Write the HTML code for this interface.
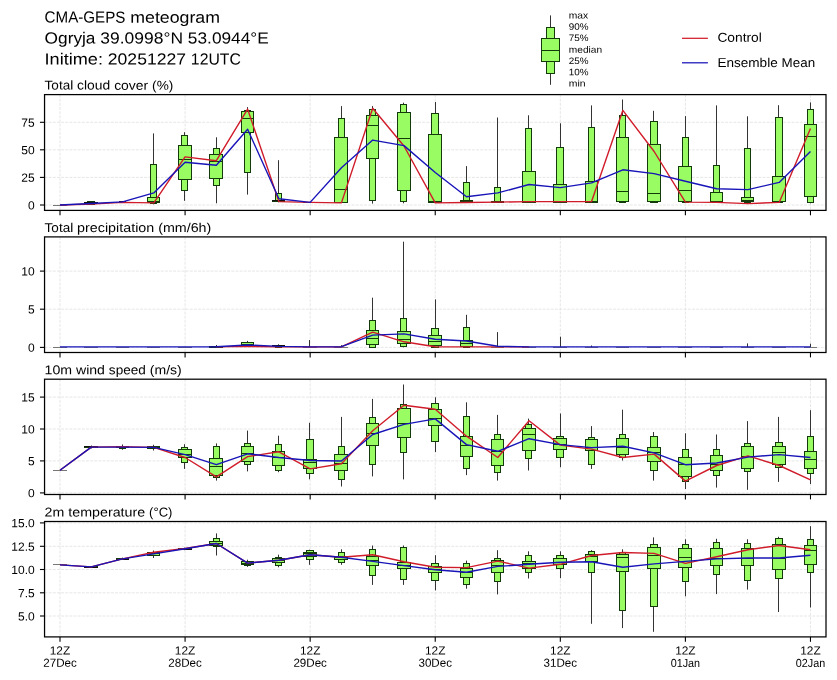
<!DOCTYPE html>
<html lang="en"><head><meta charset="utf-8"><title>CMA-GEPS meteogram</title>
<style>
html,body{margin:0;padding:0;background:#fff;}
body{width:837px;height:680px;overflow:hidden;}
svg{display:block;font-family:"Liberation Sans",sans-serif;will-change:transform;}
.gr{stroke:#e0e0e0;stroke-width:0.8;stroke-dasharray:2.9 1.25;fill:none;}
.fr{stroke:#000;stroke-width:1.25;fill:none;}
.tk{stroke:#000;stroke-width:1.1;}
.wh{stroke:#333;stroke-width:1;}
.bx{fill:#98fc62;stroke:#123a0a;stroke-width:1;}
.md{stroke:#123a0a;stroke-width:1;}
.be{stroke:#111;stroke-width:1;}
.bk{stroke:#111;}
.mg{stroke:#777;stroke-width:1;}
.rl{stroke:#d01c2a;stroke-width:1.4;fill:none;stroke-linejoin:round;}
.bl{stroke:#1814b8;stroke-width:1.4;fill:none;stroke-linejoin:round;}
</style></head><body>
<svg width="837" height="680" viewBox="0 0 837 680">
<rect x="0" y="0" width="837" height="680" fill="#fff"/>
<text x="44.6" y="22.6" font-size="16.12" fill="#000" transform="rotate(0.03 44.6 22.6)"><tspan x="44.6" textLength="80.82" lengthAdjust="spacingAndGlyphs">CMA-GEPS</tspan> <tspan x="130.3" textLength="89.66" lengthAdjust="spacingAndGlyphs">meteogram</tspan></text>
<text x="44.6" y="43.5" font-size="16.12" fill="#000" transform="rotate(0.03 44.6 43.5)"><tspan x="44.6" textLength="50.89" lengthAdjust="spacingAndGlyphs">Ogryja</tspan> <tspan x="100.37" textLength="82.63" lengthAdjust="spacingAndGlyphs">39.0998°N</tspan> <tspan x="187.88" textLength="80.85" lengthAdjust="spacingAndGlyphs">53.0944°E</tspan></text>
<text x="44.6" y="64.4" font-size="16.12" fill="#000" transform="rotate(0.03 44.6 64.4)"><tspan x="44.6" textLength="58.37" lengthAdjust="spacingAndGlyphs">Initime:</tspan> <tspan x="107.85" textLength="78.13" lengthAdjust="spacingAndGlyphs">20251227</tspan> <tspan x="190.86" textLength="49.96" lengthAdjust="spacingAndGlyphs">12UTC</tspan></text>
<line x1="550.5" y1="15.4" x2="550.5" y2="27.2" class="wh"/>
<line x1="550.5" y1="73.2" x2="550.5" y2="84.8" class="wh"/>
<rect x="546.5" y="27.5" width="8" height="46" class="bx"/>
<rect x="541.5" y="38.5" width="18" height="23" class="bx"/>
<line x1="541" y1="50.5" x2="560" y2="50.5" class="md"/>
<text x="568.8" y="18.4" font-size="9.35" textLength="19.39" lengthAdjust="spacingAndGlyphs" fill="#000" transform="rotate(0.03 568.8 18.4)">max</text>
<text x="568.8" y="29.8" font-size="9.35" textLength="19.78" lengthAdjust="spacingAndGlyphs" fill="#000" transform="rotate(0.03 568.8 29.8)">90%</text>
<text x="568.8" y="41" font-size="9.35" textLength="19.78" lengthAdjust="spacingAndGlyphs" fill="#000" transform="rotate(0.03 568.8 41)">75%</text>
<text x="568.8" y="52.7" font-size="9.35" textLength="33.36" lengthAdjust="spacingAndGlyphs" fill="#000" transform="rotate(0.03 568.8 52.7)">median</text>
<text x="568.8" y="63.9" font-size="9.35" textLength="19.78" lengthAdjust="spacingAndGlyphs" fill="#000" transform="rotate(0.03 568.8 63.9)">25%</text>
<text x="568.8" y="75.2" font-size="9.35" textLength="19.78" lengthAdjust="spacingAndGlyphs" fill="#000" transform="rotate(0.03 568.8 75.2)">10%</text>
<text x="568.8" y="86.6" font-size="9.35" textLength="16.78" lengthAdjust="spacingAndGlyphs" fill="#000" transform="rotate(0.03 568.8 86.6)">min</text>
<line x1="682" y1="38.3" x2="707.9" y2="38.3" stroke="#d01c2a" stroke-width="1.25"/>
<line x1="682" y1="62.8" x2="707.9" y2="62.8" stroke="#1814b8" stroke-width="1.25"/>
<text x="717.4" y="41.8" font-size="12.92" textLength="44.46" lengthAdjust="spacingAndGlyphs" fill="#000" transform="rotate(0.03 717.4 41.8)">Control</text>
<text x="717.4" y="67" font-size="12.92" fill="#000" transform="rotate(0.03 717.4 67)"><tspan x="717.4" textLength="60.32" lengthAdjust="spacingAndGlyphs">Ensemble</tspan> <tspan x="781.63" textLength="33.51" lengthAdjust="spacingAndGlyphs">Mean</tspan></text>
<text x="44.6" y="89.6" font-size="12.86" fill="#000" transform="rotate(0.03 44.6 89.6)"><tspan x="44.6" textLength="28.61" lengthAdjust="spacingAndGlyphs">Total</tspan> <tspan x="77.1" textLength="33.17" lengthAdjust="spacingAndGlyphs">cloud</tspan> <tspan x="114.17" textLength="34.05" lengthAdjust="spacingAndGlyphs">cover</tspan> <tspan x="152.12" textLength="21.2" lengthAdjust="spacingAndGlyphs">(%)</tspan></text>
<line x1="60" y1="94.6" x2="60" y2="210.4" class="gr"/>
<line x1="185.08" y1="94.6" x2="185.08" y2="210.4" class="gr"/>
<line x1="310.16" y1="94.6" x2="310.16" y2="210.4" class="gr"/>
<line x1="435.24" y1="94.6" x2="435.24" y2="210.4" class="gr"/>
<line x1="560.32" y1="94.6" x2="560.32" y2="210.4" class="gr"/>
<line x1="685.4" y1="94.6" x2="685.4" y2="210.4" class="gr"/>
<line x1="810.48" y1="94.6" x2="810.48" y2="210.4" class="gr"/>
<line x1="44.55" y1="205" x2="826" y2="205" class="gr"/>
<line x1="44.55" y1="177.4" x2="826" y2="177.4" class="gr"/>
<line x1="44.55" y1="149.8" x2="826" y2="149.8" class="gr"/>
<line x1="44.55" y1="122.3" x2="826" y2="122.3" class="gr"/>
<line x1="53" y1="205.5" x2="67" y2="205.5" class="mg"/>
<line x1="91.5" y1="201.1" x2="91.5" y2="201.8" class="wh"/>
<line x1="91.5" y1="204.3" x2="91.5" y2="204.8" class="wh"/>
<rect x="87.5" y="201.5" width="7" height="3" class="bx"/>
<rect x="84.5" y="202.5" width="13" height="1" class="bx bk"/>
<line x1="84" y1="203.5" x2="98" y2="203.5" class="md"/>
<line x1="122.5" y1="201.5" x2="122.5" y2="201.8" class="wh"/>
<line x1="122.5" y1="202.6" x2="122.5" y2="202.8" class="wh"/>
<rect x="119.5" y="201.5" width="6" height="1" class="bx bk"/>
<line x1="116" y1="202.5" x2="129" y2="202.5" class="be"/>
<line x1="116" y1="202.5" x2="129" y2="202.5" class="md"/>
<line x1="153.5" y1="133.4" x2="153.5" y2="164.4" class="wh"/>
<line x1="153.5" y1="203.3" x2="153.5" y2="204.3" class="wh"/>
<rect x="150.5" y="164.5" width="6" height="39" class="bx"/>
<rect x="147.5" y="197.5" width="12" height="5" class="bx"/>
<line x1="147" y1="201.5" x2="160" y2="201.5" class="md"/>
<line x1="184.5" y1="132.2" x2="184.5" y2="135.4" class="wh"/>
<line x1="184.5" y1="190.6" x2="184.5" y2="200.8" class="wh"/>
<rect x="181.5" y="135.5" width="6" height="55" class="bx"/>
<rect x="178.5" y="145.5" width="13" height="34" class="bx"/>
<line x1="178" y1="159.5" x2="192" y2="159.5" class="md"/>
<line x1="216.5" y1="137.3" x2="216.5" y2="148.2" class="wh"/>
<line x1="216.5" y1="185.7" x2="216.5" y2="203.3" class="wh"/>
<rect x="213.5" y="148.5" width="6" height="37" class="bx"/>
<rect x="209.5" y="154.5" width="13" height="24" class="bx"/>
<line x1="209" y1="161.5" x2="223" y2="161.5" class="md"/>
<line x1="247.5" y1="107.1" x2="247.5" y2="110.3" class="wh"/>
<line x1="247.5" y1="172.5" x2="247.5" y2="194.6" class="wh"/>
<rect x="244.5" y="110.5" width="6" height="62" class="bx"/>
<rect x="241.5" y="111.5" width="12" height="21" class="bx"/>
<line x1="241" y1="118.5" x2="254" y2="118.5" class="md"/>
<line x1="278.5" y1="160.2" x2="278.5" y2="193.4" class="wh"/>
<line x1="278.5" y1="201.8" x2="278.5" y2="202.3" class="wh"/>
<rect x="275.5" y="193.5" width="6" height="8" class="bx"/>
<rect x="272.5" y="200.5" width="12" height="1" class="bx bk"/>
<line x1="272" y1="201.5" x2="285" y2="201.5" class="md"/>
<line x1="309.5" y1="201.9" x2="309.5" y2="202.1" class="wh"/>
<line x1="309.5" y1="202.6" x2="309.5" y2="202.8" class="wh"/>
<line x1="306" y1="202.5" x2="314" y2="202.5" class="be"/>
<line x1="303" y1="202.5" x2="317" y2="202.5" class="be"/>
<line x1="303" y1="202.5" x2="317" y2="202.5" class="md"/>
<line x1="341.5" y1="106.1" x2="341.5" y2="118.3" class="wh"/>
<line x1="341.5" y1="202.6" x2="341.5" y2="202.9" class="wh"/>
<rect x="338.5" y="118.5" width="6" height="84" class="bx"/>
<rect x="334.5" y="137.5" width="13" height="65" class="bx"/>
<line x1="334" y1="189.5" x2="348" y2="189.5" class="md"/>
<line x1="372.5" y1="106.1" x2="372.5" y2="109.4" class="wh"/>
<line x1="372.5" y1="200.8" x2="372.5" y2="203.6" class="wh"/>
<rect x="369.5" y="109.5" width="6" height="91" class="bx"/>
<rect x="366.5" y="115.5" width="12" height="43" class="bx"/>
<line x1="366" y1="125.5" x2="379" y2="125.5" class="md"/>
<line x1="403.5" y1="102.7" x2="403.5" y2="104.4" class="wh"/>
<line x1="403.5" y1="201.6" x2="403.5" y2="203.3" class="wh"/>
<rect x="400.5" y="104.5" width="6" height="97" class="bx"/>
<rect x="397.5" y="112.5" width="13" height="78" class="bx"/>
<line x1="397" y1="138.5" x2="411" y2="138.5" class="md"/>
<line x1="435.5" y1="102" x2="435.5" y2="113.3" class="wh"/>
<line x1="435.5" y1="202.3" x2="435.5" y2="202.9" class="wh"/>
<rect x="431.5" y="113.5" width="7" height="89" class="bx"/>
<rect x="428.5" y="134.5" width="13" height="68" class="bx"/>
<line x1="428" y1="201.5" x2="442" y2="201.5" class="md"/>
<line x1="466.5" y1="166.1" x2="466.5" y2="182.5" class="wh"/>
<line x1="466.5" y1="202.3" x2="466.5" y2="202.9" class="wh"/>
<rect x="463.5" y="182.5" width="6" height="20" class="bx"/>
<rect x="460.5" y="200.5" width="12" height="2" class="bx"/>
<line x1="460" y1="201.5" x2="473" y2="201.5" class="md"/>
<line x1="497.5" y1="117.5" x2="497.5" y2="187.4" class="wh"/>
<line x1="497.5" y1="202.3" x2="497.5" y2="202.8" class="wh"/>
<rect x="494.5" y="187.5" width="6" height="15" class="bx"/>
<rect x="491.5" y="201.5" width="12" height="1" class="bx bk"/>
<line x1="491" y1="201.5" x2="504" y2="201.5" class="md"/>
<line x1="528.5" y1="115.3" x2="528.5" y2="128.9" class="wh"/>
<line x1="528.5" y1="202.3" x2="528.5" y2="202.8" class="wh"/>
<rect x="525.5" y="128.5" width="6" height="74" class="bx"/>
<rect x="522.5" y="171.5" width="13" height="31" class="bx"/>
<line x1="522" y1="201.5" x2="536" y2="201.5" class="md"/>
<line x1="560.5" y1="123.3" x2="560.5" y2="147.7" class="wh"/>
<line x1="560.5" y1="202.3" x2="560.5" y2="202.8" class="wh"/>
<rect x="556.5" y="147.5" width="7" height="55" class="bx"/>
<rect x="553.5" y="184.5" width="13" height="18" class="bx"/>
<line x1="553" y1="201.5" x2="567" y2="201.5" class="md"/>
<line x1="591.5" y1="105.4" x2="591.5" y2="127.5" class="wh"/>
<line x1="591.5" y1="202.3" x2="591.5" y2="202.8" class="wh"/>
<rect x="588.5" y="127.5" width="6" height="75" class="bx"/>
<rect x="585.5" y="181.5" width="12" height="21" class="bx"/>
<line x1="585" y1="201.5" x2="598" y2="201.5" class="md"/>
<line x1="622.5" y1="99.5" x2="622.5" y2="115" class="wh"/>
<line x1="622.5" y1="202.3" x2="622.5" y2="202.8" class="wh"/>
<rect x="619.5" y="115.5" width="6" height="87" class="bx"/>
<rect x="616.5" y="137.5" width="12" height="64" class="bx"/>
<line x1="616" y1="191.5" x2="629" y2="191.5" class="md"/>
<line x1="653.5" y1="110.8" x2="653.5" y2="121.7" class="wh"/>
<line x1="653.5" y1="202.3" x2="653.5" y2="202.8" class="wh"/>
<rect x="650.5" y="121.5" width="7" height="81" class="bx"/>
<rect x="647.5" y="144.5" width="13" height="57" class="bx"/>
<line x1="647" y1="193.5" x2="661" y2="193.5" class="md"/>
<line x1="685.5" y1="116.1" x2="685.5" y2="137.9" class="wh"/>
<line x1="685.5" y1="202.3" x2="685.5" y2="202.8" class="wh"/>
<rect x="682.5" y="137.5" width="6" height="65" class="bx"/>
<rect x="678.5" y="166.5" width="13" height="35" class="bx"/>
<line x1="678" y1="190.5" x2="692" y2="190.5" class="md"/>
<line x1="716.5" y1="105.4" x2="716.5" y2="165.6" class="wh"/>
<line x1="716.5" y1="202.3" x2="716.5" y2="202.8" class="wh"/>
<rect x="713.5" y="165.5" width="6" height="37" class="bx"/>
<rect x="710.5" y="192.5" width="12" height="9" class="bx"/>
<line x1="710" y1="201.5" x2="723" y2="201.5" class="md"/>
<line x1="747.5" y1="116.3" x2="747.5" y2="148.5" class="wh"/>
<line x1="747.5" y1="202.3" x2="747.5" y2="203.3" class="wh"/>
<rect x="744.5" y="148.5" width="6" height="54" class="bx"/>
<rect x="741.5" y="197.5" width="12" height="4" class="bx"/>
<line x1="741" y1="200.5" x2="754" y2="200.5" class="md"/>
<line x1="778.5" y1="105.2" x2="778.5" y2="117.5" class="wh"/>
<line x1="778.5" y1="202.3" x2="778.5" y2="202.8" class="wh"/>
<rect x="775.5" y="117.5" width="7" height="85" class="bx"/>
<rect x="772.5" y="176.5" width="13" height="25" class="bx"/>
<line x1="772" y1="201.5" x2="786" y2="201.5" class="md"/>
<line x1="810.5" y1="102.4" x2="810.5" y2="109.4" class="wh"/>
<line x1="810.5" y1="202.4" x2="810.5" y2="203.3" class="wh"/>
<rect x="807.5" y="109.5" width="6" height="93" class="bx"/>
<rect x="804.5" y="124.5" width="12" height="72" class="bx"/>
<line x1="804" y1="136.5" x2="817" y2="136.5" class="md"/>
<polyline points="60,205 91.27,204.1 122.54,202.4 153.81,202.9 185.08,156.9 216.35,160.7 247.62,109.1 278.89,201.6 310.16,202.4 341.43,202.9 372.7,108.3 403.97,146 435.24,202.9 466.51,202.5 497.78,202.1 529.05,201.6 560.32,201.6 591.59,201.6 622.86,110.3 654.13,151.5 685.4,202.1 716.67,202.4 747.94,203.6 779.21,202.4 810.48,128.4" class="rl"/>
<polyline points="60,205 91.27,203.5 122.54,201.9 153.81,192.9 185.08,162.2 216.35,165.3 247.62,129.2 278.89,198.8 310.16,202.4 341.43,167.8 372.7,140.1 403.97,145.6 435.24,172.5 466.51,196.8 497.78,192.9 529.05,184.5 560.32,187.6 591.59,182.9 622.86,169.8 654.13,173.6 685.4,181.2 716.67,188.7 747.94,189.6 779.21,182.4 810.48,151.5" class="bl"/>
<rect x="44.55" y="94.6" width="781.45" height="115.8" class="fr"/>
<line x1="39.95" y1="205" x2="44.55" y2="205" class="tk"/>
<text x="28.07" y="209.4" font-size="11.9" textLength="6.68" lengthAdjust="spacingAndGlyphs" fill="#000" transform="rotate(0.03 28.07 209.4)">0</text>
<line x1="39.95" y1="177.4" x2="44.55" y2="177.4" class="tk"/>
<text x="21.39" y="181.8" font-size="11.9" textLength="13.36" lengthAdjust="spacingAndGlyphs" fill="#000" transform="rotate(0.03 21.39 181.8)">25</text>
<line x1="39.95" y1="149.8" x2="44.55" y2="149.8" class="tk"/>
<text x="21.39" y="154.2" font-size="11.9" textLength="13.36" lengthAdjust="spacingAndGlyphs" fill="#000" transform="rotate(0.03 21.39 154.2)">50</text>
<line x1="39.95" y1="122.3" x2="44.55" y2="122.3" class="tk"/>
<text x="21.39" y="126.7" font-size="11.9" textLength="13.36" lengthAdjust="spacingAndGlyphs" fill="#000" transform="rotate(0.03 21.39 126.7)">75</text>
<line x1="60" y1="210.4" x2="60" y2="215.3" class="tk"/>
<line x1="185.08" y1="210.4" x2="185.08" y2="215.3" class="tk"/>
<line x1="310.16" y1="210.4" x2="310.16" y2="215.3" class="tk"/>
<line x1="435.24" y1="210.4" x2="435.24" y2="215.3" class="tk"/>
<line x1="560.32" y1="210.4" x2="560.32" y2="215.3" class="tk"/>
<line x1="685.4" y1="210.4" x2="685.4" y2="215.3" class="tk"/>
<line x1="810.48" y1="210.4" x2="810.48" y2="215.3" class="tk"/>
<text x="44.6" y="231.9" font-size="12.86" fill="#000" transform="rotate(0.03 44.6 231.9)"><tspan x="44.6" textLength="28.61" lengthAdjust="spacingAndGlyphs">Total</tspan> <tspan x="77.1" textLength="77.17" lengthAdjust="spacingAndGlyphs">precipitation</tspan> <tspan x="158.17" textLength="53.11" lengthAdjust="spacingAndGlyphs">(mm/6h)</tspan></text>
<line x1="60" y1="236.9" x2="60" y2="352.5" class="gr"/>
<line x1="185.08" y1="236.9" x2="185.08" y2="352.5" class="gr"/>
<line x1="310.16" y1="236.9" x2="310.16" y2="352.5" class="gr"/>
<line x1="435.24" y1="236.9" x2="435.24" y2="352.5" class="gr"/>
<line x1="560.32" y1="236.9" x2="560.32" y2="352.5" class="gr"/>
<line x1="685.4" y1="236.9" x2="685.4" y2="352.5" class="gr"/>
<line x1="810.48" y1="236.9" x2="810.48" y2="352.5" class="gr"/>
<line x1="44.55" y1="347.4" x2="826" y2="347.4" class="gr"/>
<line x1="44.55" y1="309.2" x2="826" y2="309.2" class="gr"/>
<line x1="44.55" y1="271.1" x2="826" y2="271.1" class="gr"/>
<line x1="53" y1="347.5" x2="67" y2="347.5" class="mg"/>
<line x1="84" y1="347.5" x2="98" y2="347.5" class="mg"/>
<line x1="116" y1="347.5" x2="129" y2="347.5" class="mg"/>
<line x1="147" y1="347.5" x2="160" y2="347.5" class="mg"/>
<line x1="178" y1="347.5" x2="192" y2="347.5" class="mg"/>
<line x1="216.5" y1="345" x2="216.5" y2="346.5" class="wh"/>
<rect x="213.5" y="346.5" width="6" height="1" class="bx bk"/>
<rect x="209.5" y="346.5" width="13" height="1" class="bx bk"/>
<line x1="209" y1="347.5" x2="223" y2="347.5" class="md"/>
<line x1="247.5" y1="340.9" x2="247.5" y2="342.7" class="wh"/>
<line x1="247.5" y1="345.8" x2="247.5" y2="346.6" class="wh"/>
<rect x="244.5" y="342.5" width="6" height="3" class="bx"/>
<rect x="241.5" y="342.5" width="12" height="3" class="bx"/>
<line x1="241" y1="344.5" x2="254" y2="344.5" class="md"/>
<line x1="278.5" y1="344.3" x2="278.5" y2="345" class="wh"/>
<line x1="278.5" y1="347" x2="278.5" y2="347.3" class="wh"/>
<rect x="275.5" y="345.5" width="6" height="2" class="bx"/>
<rect x="272.5" y="345.5" width="12" height="1" class="bx bk"/>
<line x1="272" y1="346.5" x2="285" y2="346.5" class="md"/>
<line x1="309.5" y1="340" x2="309.5" y2="347.4" class="wh"/>
<line x1="303" y1="347.5" x2="317" y2="347.5" class="mg"/>
<line x1="341.5" y1="345.2" x2="341.5" y2="347.4" class="wh"/>
<line x1="334" y1="347.5" x2="348" y2="347.5" class="mg"/>
<line x1="372.5" y1="297.7" x2="372.5" y2="320.3" class="wh"/>
<line x1="372.5" y1="347.2" x2="372.5" y2="347.3" class="wh"/>
<rect x="369.5" y="320.5" width="6" height="27" class="bx"/>
<rect x="366.5" y="330.5" width="12" height="14" class="bx"/>
<line x1="366" y1="338.5" x2="379" y2="338.5" class="md"/>
<line x1="403.5" y1="241.7" x2="403.5" y2="318.7" class="wh"/>
<line x1="403.5" y1="346.3" x2="403.5" y2="347.3" class="wh"/>
<rect x="400.5" y="318.5" width="6" height="28" class="bx"/>
<rect x="397.5" y="331.5" width="13" height="12" class="bx"/>
<line x1="397" y1="339.5" x2="411" y2="339.5" class="md"/>
<line x1="435.5" y1="299.4" x2="435.5" y2="328.4" class="wh"/>
<line x1="435.5" y1="347" x2="435.5" y2="347.3" class="wh"/>
<rect x="431.5" y="328.5" width="7" height="19" class="bx"/>
<rect x="428.5" y="335.5" width="13" height="10" class="bx"/>
<line x1="428" y1="341.5" x2="442" y2="341.5" class="md"/>
<line x1="466.5" y1="314.8" x2="466.5" y2="327.1" class="wh"/>
<line x1="466.5" y1="347.2" x2="466.5" y2="347.3" class="wh"/>
<rect x="463.5" y="327.5" width="6" height="20" class="bx"/>
<rect x="460.5" y="340.5" width="12" height="6" class="bx"/>
<line x1="460" y1="343.5" x2="473" y2="343.5" class="md"/>
<line x1="497.5" y1="332.1" x2="497.5" y2="347.4" class="wh"/>
<line x1="491" y1="347.5" x2="504" y2="347.5" class="mg"/>
<line x1="522" y1="347.5" x2="536" y2="347.5" class="mg"/>
<line x1="560.5" y1="336.7" x2="560.5" y2="347.4" class="wh"/>
<line x1="553" y1="347.5" x2="567" y2="347.5" class="mg"/>
<line x1="591.5" y1="345.5" x2="591.5" y2="347.4" class="wh"/>
<line x1="585" y1="347.5" x2="598" y2="347.5" class="mg"/>
<line x1="616" y1="347.5" x2="629" y2="347.5" class="mg"/>
<line x1="647" y1="347.5" x2="661" y2="347.5" class="mg"/>
<line x1="678" y1="347.5" x2="692" y2="347.5" class="mg"/>
<line x1="710" y1="347.5" x2="723" y2="347.5" class="mg"/>
<line x1="747.5" y1="343.4" x2="747.5" y2="347.4" class="wh"/>
<line x1="741" y1="347.5" x2="754" y2="347.5" class="mg"/>
<line x1="772" y1="347.5" x2="786" y2="347.5" class="mg"/>
<line x1="810.5" y1="343.7" x2="810.5" y2="347.4" class="wh"/>
<line x1="804" y1="347.5" x2="817" y2="347.5" class="mg"/>
<polyline points="216.35,346.9 247.62,346.4 278.89,346.9 310.16,346.9 341.43,346.9 372.7,332.2 403.97,341.8 435.24,346.8 466.51,346.9 497.78,346.9 529.05,346.9" class="rl"/>
<polyline points="60,346.9 91.27,346.9 122.54,346.9 153.81,346.9 185.08,346.9 216.35,346.8 247.62,345 278.89,346.4 310.16,346.9 341.43,346.7 372.7,335.1 403.97,333.9 435.24,339.3 466.51,341 497.78,346.3 529.05,346.9 560.32,346.9 591.59,346.9 622.86,346.9 654.13,346.9 685.4,346.9 716.67,346.9 747.94,346.9 779.21,346.9 810.48,346.9" class="bl"/>
<rect x="44.55" y="236.9" width="781.45" height="115.6" class="fr"/>
<line x1="39.95" y1="347.4" x2="44.55" y2="347.4" class="tk"/>
<text x="28.07" y="351.8" font-size="11.9" textLength="6.68" lengthAdjust="spacingAndGlyphs" fill="#000" transform="rotate(0.03 28.07 351.8)">0</text>
<line x1="39.95" y1="309.2" x2="44.55" y2="309.2" class="tk"/>
<text x="28.07" y="313.6" font-size="11.9" textLength="6.68" lengthAdjust="spacingAndGlyphs" fill="#000" transform="rotate(0.03 28.07 313.6)">5</text>
<line x1="39.95" y1="271.1" x2="44.55" y2="271.1" class="tk"/>
<text x="21.39" y="275.5" font-size="11.9" textLength="13.36" lengthAdjust="spacingAndGlyphs" fill="#000" transform="rotate(0.03 21.39 275.5)">10</text>
<line x1="60" y1="352.5" x2="60" y2="357.4" class="tk"/>
<line x1="185.08" y1="352.5" x2="185.08" y2="357.4" class="tk"/>
<line x1="310.16" y1="352.5" x2="310.16" y2="357.4" class="tk"/>
<line x1="435.24" y1="352.5" x2="435.24" y2="357.4" class="tk"/>
<line x1="560.32" y1="352.5" x2="560.32" y2="357.4" class="tk"/>
<line x1="685.4" y1="352.5" x2="685.4" y2="357.4" class="tk"/>
<line x1="810.48" y1="352.5" x2="810.48" y2="357.4" class="tk"/>
<text x="44.6" y="374.2" font-size="12.86" fill="#000" transform="rotate(0.03 44.6 374.2)"><tspan x="44.6" textLength="27.52" lengthAdjust="spacingAndGlyphs">10m</tspan> <tspan x="76.01" textLength="28.96" lengthAdjust="spacingAndGlyphs">wind</tspan> <tspan x="108.87" textLength="37.01" lengthAdjust="spacingAndGlyphs">speed</tspan> <tspan x="149.77" textLength="32" lengthAdjust="spacingAndGlyphs">(m/s)</tspan></text>
<line x1="60" y1="379.2" x2="60" y2="494.5" class="gr"/>
<line x1="185.08" y1="379.2" x2="185.08" y2="494.5" class="gr"/>
<line x1="310.16" y1="379.2" x2="310.16" y2="494.5" class="gr"/>
<line x1="435.24" y1="379.2" x2="435.24" y2="494.5" class="gr"/>
<line x1="560.32" y1="379.2" x2="560.32" y2="494.5" class="gr"/>
<line x1="685.4" y1="379.2" x2="685.4" y2="494.5" class="gr"/>
<line x1="810.48" y1="379.2" x2="810.48" y2="494.5" class="gr"/>
<line x1="44.55" y1="492.9" x2="826" y2="492.9" class="gr"/>
<line x1="44.55" y1="460.9" x2="826" y2="460.9" class="gr"/>
<line x1="44.55" y1="429" x2="826" y2="429" class="gr"/>
<line x1="44.55" y1="397.1" x2="826" y2="397.1" class="gr"/>
<line x1="53" y1="470.5" x2="67" y2="470.5" class="mg"/>
<line x1="91.5" y1="445.5" x2="91.5" y2="446.3" class="wh"/>
<line x1="91.5" y1="447.9" x2="91.5" y2="448.5" class="wh"/>
<rect x="87.5" y="446.5" width="7" height="1" class="bx bk"/>
<rect x="84.5" y="446.5" width="13" height="1" class="bx bk"/>
<line x1="84" y1="447.5" x2="98" y2="447.5" class="md"/>
<line x1="122.5" y1="444.5" x2="122.5" y2="446.2" class="wh"/>
<line x1="122.5" y1="448.2" x2="122.5" y2="449.8" class="wh"/>
<rect x="119.5" y="446.5" width="6" height="2" class="bx"/>
<rect x="116.5" y="446.5" width="12" height="1" class="bx bk"/>
<line x1="116" y1="447.5" x2="129" y2="447.5" class="md"/>
<line x1="153.5" y1="444.8" x2="153.5" y2="446.3" class="wh"/>
<line x1="153.5" y1="448.8" x2="153.5" y2="450.5" class="wh"/>
<rect x="150.5" y="446.5" width="6" height="2" class="bx"/>
<rect x="147.5" y="446.5" width="12" height="2" class="bx"/>
<line x1="147" y1="447.5" x2="160" y2="447.5" class="md"/>
<line x1="184.5" y1="444.2" x2="184.5" y2="447.4" class="wh"/>
<line x1="184.5" y1="462.2" x2="184.5" y2="468.9" class="wh"/>
<rect x="181.5" y="447.5" width="6" height="15" class="bx"/>
<rect x="178.5" y="449.5" width="13" height="8" class="bx"/>
<line x1="178" y1="454.5" x2="192" y2="454.5" class="md"/>
<line x1="216.5" y1="443.4" x2="216.5" y2="446.2" class="wh"/>
<line x1="216.5" y1="477.3" x2="216.5" y2="480.6" class="wh"/>
<rect x="213.5" y="446.5" width="6" height="31" class="bx"/>
<rect x="209.5" y="458.5" width="13" height="17" class="bx"/>
<line x1="209" y1="466.5" x2="223" y2="466.5" class="md"/>
<line x1="247.5" y1="430.6" x2="247.5" y2="443.4" class="wh"/>
<line x1="247.5" y1="464.3" x2="247.5" y2="471.4" class="wh"/>
<rect x="244.5" y="443.5" width="6" height="21" class="bx"/>
<rect x="241.5" y="446.5" width="12" height="15" class="bx"/>
<line x1="241" y1="453.5" x2="254" y2="453.5" class="md"/>
<line x1="278.5" y1="435.7" x2="278.5" y2="444.2" class="wh"/>
<line x1="278.5" y1="470.2" x2="278.5" y2="472.2" class="wh"/>
<rect x="275.5" y="444.5" width="6" height="26" class="bx"/>
<rect x="272.5" y="451.5" width="12" height="14" class="bx"/>
<line x1="272" y1="457.5" x2="285" y2="457.5" class="md"/>
<line x1="309.5" y1="422.8" x2="309.5" y2="439" class="wh"/>
<line x1="309.5" y1="473.4" x2="309.5" y2="479.3" class="wh"/>
<rect x="306.5" y="439.5" width="7" height="34" class="bx"/>
<rect x="303.5" y="459.5" width="13" height="9" class="bx"/>
<line x1="303" y1="462.5" x2="317" y2="462.5" class="md"/>
<line x1="341.5" y1="416.9" x2="341.5" y2="446.7" class="wh"/>
<line x1="341.5" y1="479.4" x2="341.5" y2="486.5" class="wh"/>
<rect x="338.5" y="446.5" width="6" height="33" class="bx"/>
<rect x="334.5" y="454.5" width="13" height="16" class="bx"/>
<line x1="334" y1="463.5" x2="348" y2="463.5" class="md"/>
<line x1="372.5" y1="398.9" x2="372.5" y2="417.2" class="wh"/>
<line x1="372.5" y1="464.3" x2="372.5" y2="476.4" class="wh"/>
<rect x="369.5" y="417.5" width="6" height="47" class="bx"/>
<rect x="366.5" y="423.5" width="12" height="22" class="bx"/>
<line x1="366" y1="433.5" x2="379" y2="433.5" class="md"/>
<line x1="403.5" y1="384.5" x2="403.5" y2="404.8" class="wh"/>
<line x1="403.5" y1="452.4" x2="403.5" y2="479.4" class="wh"/>
<rect x="400.5" y="404.5" width="6" height="48" class="bx"/>
<rect x="397.5" y="408.5" width="13" height="29" class="bx"/>
<line x1="397" y1="423.5" x2="411" y2="423.5" class="md"/>
<line x1="435.5" y1="397.3" x2="435.5" y2="403.5" class="wh"/>
<line x1="435.5" y1="441.5" x2="435.5" y2="452.1" class="wh"/>
<rect x="431.5" y="403.5" width="7" height="38" class="bx"/>
<rect x="428.5" y="409.5" width="13" height="16" class="bx"/>
<line x1="428" y1="418.5" x2="442" y2="418.5" class="md"/>
<line x1="466.5" y1="402.3" x2="466.5" y2="416.9" class="wh"/>
<line x1="466.5" y1="468.9" x2="466.5" y2="475.1" class="wh"/>
<rect x="463.5" y="416.5" width="6" height="52" class="bx"/>
<rect x="460.5" y="436.5" width="12" height="20" class="bx"/>
<line x1="460" y1="445.5" x2="473" y2="445.5" class="md"/>
<line x1="497.5" y1="414.9" x2="497.5" y2="434.5" class="wh"/>
<line x1="497.5" y1="472.2" x2="497.5" y2="480.6" class="wh"/>
<rect x="494.5" y="434.5" width="6" height="38" class="bx"/>
<rect x="491.5" y="439.5" width="12" height="26" class="bx"/>
<line x1="491" y1="451.5" x2="504" y2="451.5" class="md"/>
<line x1="528.5" y1="418.6" x2="528.5" y2="424.4" class="wh"/>
<line x1="528.5" y1="458.3" x2="528.5" y2="470.5" class="wh"/>
<rect x="525.5" y="424.5" width="6" height="34" class="bx"/>
<rect x="522.5" y="428.5" width="13" height="22" class="bx"/>
<line x1="522" y1="434.5" x2="536" y2="434.5" class="md"/>
<line x1="560.5" y1="413.5" x2="560.5" y2="436.7" class="wh"/>
<line x1="560.5" y1="457.1" x2="560.5" y2="467.2" class="wh"/>
<rect x="556.5" y="436.5" width="7" height="21" class="bx"/>
<rect x="553.5" y="438.5" width="13" height="11" class="bx"/>
<line x1="553" y1="444.5" x2="567" y2="444.5" class="md"/>
<line x1="591.5" y1="426.1" x2="591.5" y2="437.5" class="wh"/>
<line x1="591.5" y1="464.3" x2="591.5" y2="468.9" class="wh"/>
<rect x="588.5" y="437.5" width="6" height="27" class="bx"/>
<rect x="585.5" y="439.5" width="12" height="11" class="bx"/>
<line x1="585" y1="447.5" x2="598" y2="447.5" class="md"/>
<line x1="622.5" y1="409.7" x2="622.5" y2="434.8" class="wh"/>
<line x1="622.5" y1="457.5" x2="622.5" y2="460.5" class="wh"/>
<rect x="619.5" y="434.5" width="6" height="23" class="bx"/>
<rect x="616.5" y="438.5" width="12" height="16" class="bx"/>
<line x1="616" y1="447.5" x2="629" y2="447.5" class="md"/>
<line x1="653.5" y1="432" x2="653.5" y2="436.5" class="wh"/>
<line x1="653.5" y1="470.2" x2="653.5" y2="480.6" class="wh"/>
<rect x="650.5" y="436.5" width="7" height="34" class="bx"/>
<rect x="647.5" y="447.5" width="13" height="14" class="bx"/>
<line x1="647" y1="452.5" x2="661" y2="452.5" class="md"/>
<line x1="685.5" y1="433.3" x2="685.5" y2="449.6" class="wh"/>
<line x1="685.5" y1="481.1" x2="685.5" y2="489" class="wh"/>
<rect x="682.5" y="449.5" width="6" height="32" class="bx"/>
<rect x="678.5" y="457.5" width="13" height="19" class="bx"/>
<line x1="678" y1="464.5" x2="692" y2="464.5" class="md"/>
<line x1="716.5" y1="434.5" x2="716.5" y2="449.9" class="wh"/>
<line x1="716.5" y1="475.6" x2="716.5" y2="487.6" class="wh"/>
<rect x="713.5" y="449.5" width="6" height="26" class="bx"/>
<rect x="710.5" y="455.5" width="12" height="15" class="bx"/>
<line x1="710" y1="464.5" x2="723" y2="464.5" class="md"/>
<line x1="747.5" y1="421.1" x2="747.5" y2="443.7" class="wh"/>
<line x1="747.5" y1="471.9" x2="747.5" y2="489.8" class="wh"/>
<rect x="744.5" y="443.5" width="6" height="28" class="bx"/>
<rect x="741.5" y="446.5" width="12" height="22" class="bx"/>
<line x1="741" y1="456.5" x2="754" y2="456.5" class="md"/>
<line x1="778.5" y1="416.9" x2="778.5" y2="442.5" class="wh"/>
<line x1="778.5" y1="467.2" x2="778.5" y2="481.9" class="wh"/>
<rect x="775.5" y="442.5" width="7" height="25" class="bx"/>
<rect x="772.5" y="446.5" width="13" height="18" class="bx"/>
<line x1="772" y1="452.5" x2="786" y2="452.5" class="md"/>
<line x1="810.5" y1="410.2" x2="810.5" y2="436.7" class="wh"/>
<line x1="810.5" y1="473.1" x2="810.5" y2="484" class="wh"/>
<rect x="807.5" y="436.5" width="6" height="37" class="bx"/>
<rect x="804.5" y="451.5" width="12" height="17" class="bx"/>
<line x1="804" y1="459.5" x2="817" y2="459.5" class="md"/>
<polyline points="60,470.2 91.27,447.1 122.54,446.6 153.81,447.4 185.08,457.5 216.35,476.9 247.62,456.6 278.89,451.8 310.16,468.9 341.43,463.8 372.7,430.8 403.97,405.2 435.24,409.3 466.51,436.2 497.78,457.5 529.05,420.7 560.32,445.1 591.59,449.1 622.86,457.5 654.13,454.1 685.4,481.1 716.67,465.5 747.94,455.8 779.21,465.5 810.48,479.8" class="rl"/>
<polyline points="60,470.2 91.27,447.1 122.54,447.1 153.81,447.4 185.08,454.6 216.35,464.7 247.62,453.8 278.89,457.5 310.16,460.5 341.43,461 372.7,434.5 403.97,424.4 435.24,418.9 466.51,444.6 497.78,451.3 529.05,438.7 560.32,444.6 591.59,447.6 622.86,446.2 654.13,452.9 685.4,464.7 716.67,463 747.94,457.1 779.21,454.6 810.48,457.5" class="bl"/>
<rect x="44.55" y="379.2" width="781.45" height="115.3" class="fr"/>
<line x1="39.95" y1="492.9" x2="44.55" y2="492.9" class="tk"/>
<text x="28.07" y="497.3" font-size="11.9" textLength="6.68" lengthAdjust="spacingAndGlyphs" fill="#000" transform="rotate(0.03 28.07 497.3)">0</text>
<line x1="39.95" y1="460.9" x2="44.55" y2="460.9" class="tk"/>
<text x="28.07" y="465.3" font-size="11.9" textLength="6.68" lengthAdjust="spacingAndGlyphs" fill="#000" transform="rotate(0.03 28.07 465.3)">5</text>
<line x1="39.95" y1="429" x2="44.55" y2="429" class="tk"/>
<text x="21.39" y="433.4" font-size="11.9" textLength="13.36" lengthAdjust="spacingAndGlyphs" fill="#000" transform="rotate(0.03 21.39 433.4)">10</text>
<line x1="39.95" y1="397.1" x2="44.55" y2="397.1" class="tk"/>
<text x="21.39" y="401.5" font-size="11.9" textLength="13.36" lengthAdjust="spacingAndGlyphs" fill="#000" transform="rotate(0.03 21.39 401.5)">15</text>
<line x1="60" y1="494.5" x2="60" y2="499.4" class="tk"/>
<line x1="185.08" y1="494.5" x2="185.08" y2="499.4" class="tk"/>
<line x1="310.16" y1="494.5" x2="310.16" y2="499.4" class="tk"/>
<line x1="435.24" y1="494.5" x2="435.24" y2="499.4" class="tk"/>
<line x1="560.32" y1="494.5" x2="560.32" y2="499.4" class="tk"/>
<line x1="685.4" y1="494.5" x2="685.4" y2="499.4" class="tk"/>
<line x1="810.48" y1="494.5" x2="810.48" y2="499.4" class="tk"/>
<text x="44.6" y="516.5" font-size="12.86" fill="#000" transform="rotate(0.03 44.6 516.5)"><tspan x="44.6" textLength="19.73" lengthAdjust="spacingAndGlyphs">2m</tspan> <tspan x="68.22" textLength="77" lengthAdjust="spacingAndGlyphs">temperature</tspan> <tspan x="149.11" textLength="23.32" lengthAdjust="spacingAndGlyphs">(°C)</tspan></text>
<line x1="60" y1="521.5" x2="60" y2="636.9" class="gr"/>
<line x1="185.08" y1="521.5" x2="185.08" y2="636.9" class="gr"/>
<line x1="310.16" y1="521.5" x2="310.16" y2="636.9" class="gr"/>
<line x1="435.24" y1="521.5" x2="435.24" y2="636.9" class="gr"/>
<line x1="560.32" y1="521.5" x2="560.32" y2="636.9" class="gr"/>
<line x1="685.4" y1="521.5" x2="685.4" y2="636.9" class="gr"/>
<line x1="810.48" y1="521.5" x2="810.48" y2="636.9" class="gr"/>
<line x1="44.55" y1="616" x2="826" y2="616" class="gr"/>
<line x1="44.55" y1="592.8" x2="826" y2="592.8" class="gr"/>
<line x1="44.55" y1="569.5" x2="826" y2="569.5" class="gr"/>
<line x1="44.55" y1="546.3" x2="826" y2="546.3" class="gr"/>
<line x1="44.55" y1="522.9" x2="826" y2="522.9" class="gr"/>
<line x1="53" y1="564.5" x2="67" y2="564.5" class="mg"/>
<line x1="91.5" y1="566.2" x2="91.5" y2="566.5" class="wh"/>
<line x1="91.5" y1="567.4" x2="91.5" y2="567.8" class="wh"/>
<rect x="87.5" y="566.5" width="7" height="1" class="bx bk"/>
<rect x="84.5" y="566.5" width="13" height="1" class="bx bk"/>
<line x1="84" y1="566.5" x2="98" y2="566.5" class="md"/>
<line x1="122.5" y1="557.6" x2="122.5" y2="558.3" class="wh"/>
<line x1="122.5" y1="559.6" x2="122.5" y2="560" class="wh"/>
<rect x="119.5" y="558.5" width="6" height="1" class="bx bk"/>
<rect x="116.5" y="558.5" width="12" height="1" class="bx bk"/>
<line x1="116" y1="558.5" x2="129" y2="558.5" class="md"/>
<line x1="153.5" y1="550.5" x2="153.5" y2="552" class="wh"/>
<line x1="153.5" y1="555.5" x2="153.5" y2="558" class="wh"/>
<rect x="150.5" y="552.5" width="6" height="3" class="bx"/>
<rect x="147.5" y="552.5" width="12" height="3" class="bx"/>
<line x1="147" y1="553.5" x2="160" y2="553.5" class="md"/>
<line x1="184.5" y1="547.6" x2="184.5" y2="548.2" class="wh"/>
<line x1="184.5" y1="549.6" x2="184.5" y2="550.2" class="wh"/>
<rect x="181.5" y="548.5" width="6" height="1" class="bx bk"/>
<rect x="178.5" y="548.5" width="13" height="1" class="bx bk"/>
<line x1="178" y1="548.5" x2="192" y2="548.5" class="md"/>
<line x1="216.5" y1="533.4" x2="216.5" y2="538.8" class="wh"/>
<line x1="216.5" y1="546" x2="216.5" y2="555.5" class="wh"/>
<rect x="213.5" y="538.5" width="6" height="8" class="bx"/>
<rect x="209.5" y="541.5" width="13" height="4" class="bx"/>
<line x1="209" y1="543.5" x2="223" y2="543.5" class="md"/>
<line x1="247.5" y1="559.7" x2="247.5" y2="561.1" class="wh"/>
<line x1="247.5" y1="565.9" x2="247.5" y2="566.9" class="wh"/>
<rect x="244.5" y="561.5" width="6" height="4" class="bx"/>
<rect x="241.5" y="561.5" width="12" height="3" class="bx"/>
<line x1="241" y1="563.5" x2="254" y2="563.5" class="md"/>
<line x1="278.5" y1="554.7" x2="278.5" y2="557.2" class="wh"/>
<line x1="278.5" y1="565.6" x2="278.5" y2="567.3" class="wh"/>
<rect x="275.5" y="557.5" width="6" height="8" class="bx"/>
<rect x="272.5" y="558.5" width="12" height="4" class="bx"/>
<line x1="272" y1="560.5" x2="285" y2="560.5" class="md"/>
<line x1="309.5" y1="549.7" x2="309.5" y2="550.8" class="wh"/>
<line x1="309.5" y1="559.2" x2="309.5" y2="564.8" class="wh"/>
<rect x="306.5" y="550.5" width="7" height="9" class="bx"/>
<rect x="303.5" y="552.5" width="13" height="4" class="bx"/>
<line x1="303" y1="553.5" x2="317" y2="553.5" class="md"/>
<line x1="341.5" y1="549.3" x2="341.5" y2="552.2" class="wh"/>
<line x1="341.5" y1="562.2" x2="341.5" y2="564.8" class="wh"/>
<rect x="338.5" y="552.5" width="6" height="10" class="bx"/>
<rect x="334.5" y="556.5" width="13" height="3" class="bx"/>
<line x1="334" y1="557.5" x2="348" y2="557.5" class="md"/>
<line x1="372.5" y1="545.5" x2="372.5" y2="549.3" class="wh"/>
<line x1="372.5" y1="575.3" x2="372.5" y2="584.9" class="wh"/>
<rect x="369.5" y="549.5" width="6" height="26" class="bx"/>
<rect x="366.5" y="556.5" width="12" height="9" class="bx"/>
<line x1="366" y1="560.5" x2="379" y2="560.5" class="md"/>
<line x1="403.5" y1="545.5" x2="403.5" y2="547.2" class="wh"/>
<line x1="403.5" y1="579" x2="403.5" y2="584.9" class="wh"/>
<rect x="400.5" y="547.5" width="6" height="32" class="bx"/>
<rect x="397.5" y="562.5" width="13" height="6" class="bx"/>
<line x1="397" y1="565.5" x2="411" y2="565.5" class="md"/>
<line x1="435.5" y1="555.2" x2="435.5" y2="563.4" class="wh"/>
<line x1="435.5" y1="580.4" x2="435.5" y2="590.4" class="wh"/>
<rect x="431.5" y="563.5" width="7" height="17" class="bx"/>
<rect x="428.5" y="566.5" width="13" height="6" class="bx"/>
<line x1="428" y1="569.5" x2="442" y2="569.5" class="md"/>
<line x1="466.5" y1="560.6" x2="466.5" y2="563.6" class="wh"/>
<line x1="466.5" y1="584.5" x2="466.5" y2="588.7" class="wh"/>
<rect x="463.5" y="563.5" width="6" height="21" class="bx"/>
<rect x="460.5" y="568.5" width="12" height="9" class="bx"/>
<line x1="460" y1="572.5" x2="473" y2="572.5" class="md"/>
<line x1="497.5" y1="550.2" x2="497.5" y2="558.9" class="wh"/>
<line x1="497.5" y1="581.2" x2="497.5" y2="594.4" class="wh"/>
<rect x="494.5" y="558.5" width="6" height="23" class="bx"/>
<rect x="491.5" y="560.5" width="12" height="12" class="bx"/>
<line x1="491" y1="565.5" x2="504" y2="565.5" class="md"/>
<line x1="528.5" y1="551.3" x2="528.5" y2="555" class="wh"/>
<line x1="528.5" y1="572" x2="528.5" y2="578.5" class="wh"/>
<rect x="525.5" y="555.5" width="6" height="17" class="bx"/>
<rect x="522.5" y="561.5" width="13" height="7" class="bx"/>
<line x1="522" y1="563.5" x2="536" y2="563.5" class="md"/>
<line x1="560.5" y1="551.3" x2="560.5" y2="555.5" class="wh"/>
<line x1="560.5" y1="568.9" x2="560.5" y2="578.2" class="wh"/>
<rect x="556.5" y="555.5" width="7" height="13" class="bx"/>
<rect x="553.5" y="558.5" width="13" height="6" class="bx"/>
<line x1="553" y1="562.5" x2="567" y2="562.5" class="md"/>
<line x1="591.5" y1="550.2" x2="591.5" y2="551.8" class="wh"/>
<line x1="591.5" y1="572.3" x2="591.5" y2="623.8" class="wh"/>
<rect x="588.5" y="551.5" width="6" height="21" class="bx"/>
<rect x="585.5" y="554.5" width="12" height="7" class="bx"/>
<line x1="585" y1="556.5" x2="598" y2="556.5" class="md"/>
<line x1="622.5" y1="549.3" x2="622.5" y2="552.2" class="wh"/>
<line x1="622.5" y1="610" x2="622.5" y2="628.1" class="wh"/>
<rect x="619.5" y="552.5" width="6" height="58" class="bx"/>
<rect x="616.5" y="554.5" width="12" height="17" class="bx"/>
<line x1="616" y1="557.5" x2="629" y2="557.5" class="md"/>
<line x1="653.5" y1="537.4" x2="653.5" y2="544.6" class="wh"/>
<line x1="653.5" y1="606.3" x2="653.5" y2="631.8" class="wh"/>
<rect x="650.5" y="544.5" width="7" height="62" class="bx"/>
<rect x="647.5" y="547.5" width="13" height="21" class="bx"/>
<line x1="647" y1="555.5" x2="661" y2="555.5" class="md"/>
<line x1="685.5" y1="539.3" x2="685.5" y2="544.6" class="wh"/>
<line x1="685.5" y1="581.2" x2="685.5" y2="596.3" class="wh"/>
<rect x="682.5" y="544.5" width="6" height="37" class="bx"/>
<rect x="678.5" y="548.5" width="13" height="19" class="bx"/>
<line x1="678" y1="557.5" x2="692" y2="557.5" class="md"/>
<line x1="716.5" y1="538.8" x2="716.5" y2="542.6" class="wh"/>
<line x1="716.5" y1="574.3" x2="716.5" y2="594.1" class="wh"/>
<rect x="713.5" y="542.5" width="6" height="32" class="bx"/>
<rect x="710.5" y="548.5" width="12" height="17" class="bx"/>
<line x1="710" y1="558.5" x2="723" y2="558.5" class="md"/>
<line x1="747.5" y1="539.3" x2="747.5" y2="543.5" class="wh"/>
<line x1="747.5" y1="580.7" x2="747.5" y2="589.6" class="wh"/>
<rect x="744.5" y="543.5" width="6" height="37" class="bx"/>
<rect x="741.5" y="548.5" width="12" height="17" class="bx"/>
<line x1="741" y1="558.5" x2="754" y2="558.5" class="md"/>
<line x1="778.5" y1="536.8" x2="778.5" y2="538.4" class="wh"/>
<line x1="778.5" y1="578.2" x2="778.5" y2="612" class="wh"/>
<rect x="775.5" y="538.5" width="7" height="40" class="bx"/>
<rect x="772.5" y="544.5" width="13" height="25" class="bx"/>
<line x1="772" y1="558.5" x2="786" y2="558.5" class="md"/>
<line x1="810.5" y1="526.2" x2="810.5" y2="539.9" class="wh"/>
<line x1="810.5" y1="572" x2="810.5" y2="607.5" class="wh"/>
<rect x="807.5" y="539.5" width="6" height="33" class="bx"/>
<rect x="804.5" y="545.5" width="12" height="19" class="bx"/>
<line x1="804" y1="550.5" x2="817" y2="550.5" class="md"/>
<polyline points="60,564.9 91.27,566.9 122.54,558.9 153.81,552.2 185.08,548.5 216.35,543.5 247.62,563.1 278.89,560.2 310.16,554.7 341.43,557.2 372.7,554.7 403.97,561.7 435.24,567.3 466.51,567.6 497.78,561.1 529.05,568.1 560.32,564.3 591.59,555.5 622.86,552.5 654.13,553.4 685.4,563.4 716.67,556.7 747.94,549.7 779.21,545.5 810.48,549.7" class="rl"/>
<polyline points="60,564.9 91.27,566.9 122.54,558.9 153.81,553.9 185.08,548.8 216.35,543.5 247.62,563.1 278.89,560.2 310.16,554.7 341.43,557.2 372.7,561.4 403.97,565.6 435.24,569.8 466.51,572.3 497.78,566.4 529.05,564.3 560.32,562.2 591.59,561.7 622.86,567.3 654.13,563.9 685.4,561.4 716.67,558.9 747.94,558 779.21,558 810.48,555.2" class="bl"/>
<rect x="44.55" y="521.5" width="781.45" height="115.4" class="fr"/>
<line x1="39.95" y1="616" x2="44.55" y2="616" class="tk"/>
<text x="18.05" y="620.4" font-size="11.9" textLength="16.7" lengthAdjust="spacingAndGlyphs" fill="#000" transform="rotate(0.03 18.05 620.4)">5.0</text>
<line x1="39.95" y1="592.8" x2="44.55" y2="592.8" class="tk"/>
<text x="18.05" y="597.2" font-size="11.9" textLength="16.7" lengthAdjust="spacingAndGlyphs" fill="#000" transform="rotate(0.03 18.05 597.2)">7.5</text>
<line x1="39.95" y1="569.5" x2="44.55" y2="569.5" class="tk"/>
<text x="11.37" y="573.9" font-size="11.9" textLength="23.38" lengthAdjust="spacingAndGlyphs" fill="#000" transform="rotate(0.03 11.37 573.9)">10.0</text>
<line x1="39.95" y1="546.3" x2="44.55" y2="546.3" class="tk"/>
<text x="11.37" y="550.7" font-size="11.9" textLength="23.38" lengthAdjust="spacingAndGlyphs" fill="#000" transform="rotate(0.03 11.37 550.7)">12.5</text>
<line x1="39.95" y1="522.9" x2="44.55" y2="522.9" class="tk"/>
<text x="11.37" y="527.3" font-size="11.9" textLength="23.38" lengthAdjust="spacingAndGlyphs" fill="#000" transform="rotate(0.03 11.37 527.3)">15.0</text>
<line x1="60" y1="636.9" x2="60" y2="641.8" class="tk"/>
<line x1="185.08" y1="636.9" x2="185.08" y2="641.8" class="tk"/>
<line x1="310.16" y1="636.9" x2="310.16" y2="641.8" class="tk"/>
<line x1="435.24" y1="636.9" x2="435.24" y2="641.8" class="tk"/>
<line x1="560.32" y1="636.9" x2="560.32" y2="641.8" class="tk"/>
<line x1="685.4" y1="636.9" x2="685.4" y2="641.8" class="tk"/>
<line x1="810.48" y1="636.9" x2="810.48" y2="641.8" class="tk"/>
<text x="49.77" y="654.6" font-size="11.7" textLength="20.46" lengthAdjust="spacingAndGlyphs" fill="#000" transform="rotate(0.03 49.77 654.6)">12Z</text>
<text x="43.24" y="666.7" font-size="11.7" textLength="33.52" lengthAdjust="spacingAndGlyphs" fill="#000" transform="rotate(0.03 43.24 666.7)">27Dec</text>
<text x="174.85" y="654.6" font-size="11.7" textLength="20.46" lengthAdjust="spacingAndGlyphs" fill="#000" transform="rotate(0.03 174.85 654.6)">12Z</text>
<text x="168.32" y="666.7" font-size="11.7" textLength="33.52" lengthAdjust="spacingAndGlyphs" fill="#000" transform="rotate(0.03 168.32 666.7)">28Dec</text>
<text x="299.93" y="654.6" font-size="11.7" textLength="20.46" lengthAdjust="spacingAndGlyphs" fill="#000" transform="rotate(0.03 299.93 654.6)">12Z</text>
<text x="293.4" y="666.7" font-size="11.7" textLength="33.52" lengthAdjust="spacingAndGlyphs" fill="#000" transform="rotate(0.03 293.4 666.7)">29Dec</text>
<text x="425.01" y="654.6" font-size="11.7" textLength="20.46" lengthAdjust="spacingAndGlyphs" fill="#000" transform="rotate(0.03 425.01 654.6)">12Z</text>
<text x="418.48" y="666.7" font-size="11.7" textLength="33.52" lengthAdjust="spacingAndGlyphs" fill="#000" transform="rotate(0.03 418.48 666.7)">30Dec</text>
<text x="550.09" y="654.6" font-size="11.7" textLength="20.46" lengthAdjust="spacingAndGlyphs" fill="#000" transform="rotate(0.03 550.09 654.6)">12Z</text>
<text x="543.56" y="666.7" font-size="11.7" textLength="33.52" lengthAdjust="spacingAndGlyphs" fill="#000" transform="rotate(0.03 543.56 666.7)">31Dec</text>
<text x="675.17" y="654.6" font-size="11.7" textLength="20.46" lengthAdjust="spacingAndGlyphs" fill="#000" transform="rotate(0.03 675.17 654.6)">12Z</text>
<text x="670.7" y="666.7" font-size="11.7" textLength="29.41" lengthAdjust="spacingAndGlyphs" fill="#000" transform="rotate(0.03 670.7 666.7)">01Jan</text>
<text x="800.25" y="654.6" font-size="11.7" textLength="20.46" lengthAdjust="spacingAndGlyphs" fill="#000" transform="rotate(0.03 800.25 654.6)">12Z</text>
<text x="795.78" y="666.7" font-size="11.7" textLength="29.41" lengthAdjust="spacingAndGlyphs" fill="#000" transform="rotate(0.03 795.78 666.7)">02Jan</text>
</svg></body></html>
